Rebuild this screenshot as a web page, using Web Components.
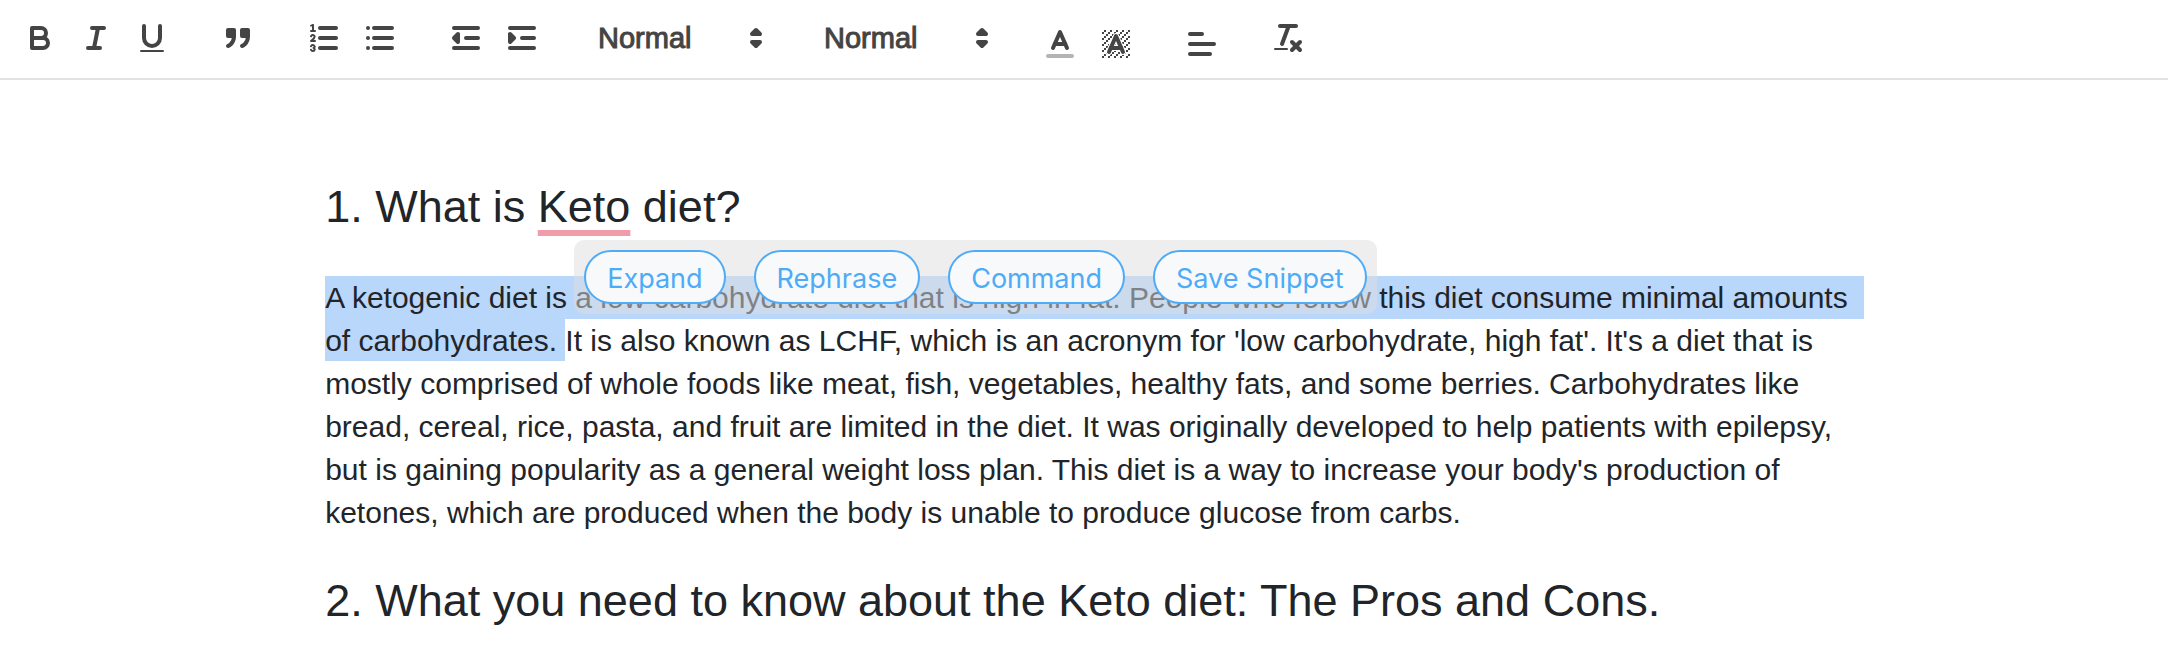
<!DOCTYPE html>
<html lang="en">
<head>
<meta charset="utf-8">
<title>Editor</title>
<style>
html,body{margin:0;background:#fff}
body{font-family:"Liberation Sans",Arial,Helvetica,sans-serif;color:#212529}
</style>
</head>
<body>
<rich-editor></rich-editor>
<script>
const line=(x1,y1,x2,y2)=>`<line x1="${x1}" y1="${y1}" x2="${x2}" y2="${y2}"/>`;
// Diagonal rows of unit squares behind the highlight letter
const hatch=()=>{
  let s='';
  for(let y=2;y<16;y++)for(let x=2;x<16;x++)if((x+y)%3===2)s+=`M${x} ${y}h1v1h-1z`;
  return `<path class="fill" d="${s}"/>`;
};
const letterA='<polyline points="5.5 13 9 5 12.5 13"/>'+line(11.63,11,6.38,11);
const ICONS={
bold:'<path d="M5,4H9.5A2.5,2.5,0,0,1,12,6.5v0A2.5,2.5,0,0,1,9.5,9H5V4Z"/><path d="M5,9h5.5A2.5,2.5,0,0,1,13,11.5v0A2.5,2.5,0,0,1,10.5,14H5V9Z"/>',
italic:line(7,4,13,4)+line(5,14,11,14)+line(8,14,10,4),
underline:'<path d="M5,3V9a4.012,4.012,0,0,0,4,4H9a4.012,4.012,0,0,0,4-4V3"/><rect class="fill" x="3" y="15" width="12" height="1" rx=".5"/>',
quote:'<g class="both"><rect x="4" y="5" width="3" height="3"/><rect x="11" y="5" width="3" height="3"/><path d="M7,8c0,4.031-3,5-3,5"/><path d="M14,8c0,4.031-3,5-3,5"/></g>',
ordered:line(7,4,15,4)+line(7,9,15,9)+line(7,14,15,14)+'<g class="thin"><path d="M2.5,5.5h2"/><path d="M4.5,10.5h-2c0-.234,1.85-1.076,1.85-2.234A0.959,0.959,0,0,0,2.5,8.156"/><path d="M2.5,14.846a0.959,0.959,0,0,0,1.85-.109A0.7,0.7,0,0,0,3.75,14a0.688,0.688,0,0,0,.6-0.736,0.959,0.959,0,0,0-1.85-.109"/></g><path class="fill" d="M3.5,6A0.5,0.5,0,0,1,3,5.5V3.085l-0.276.138A0.5,0.5,0,0,1,2.053,3c-0.124-.247-0.023-0.324.224-0.447l1-.5A0.5,0.5,0,0,1,4,2.5v3A0.5,0.5,0,0,1,3.5,6Z"/>',
bullet:line(6,4,15,4)+line(6,9,15,9)+line(6,14,15,14)+line(3,4,3,4)+line(3,9,3,9)+line(3,14,3,14),
outdent:line(3,14,15,14)+line(3,4,15,4)+line(9,9,15,9)+'<polyline class="both" points="5 7 5 11 3 9 5 7"/>',
indent:line(3,14,15,14)+line(3,4,15,4)+line(9,9,15,9)+'<polyline class="both" points="3 7 3 11 5 9 3 7"/>',
arrows:'<polygon class="both" points="7 11 9 13 11 11"/><polygon class="both" points="7 7 9 5 11 7"/>',
color:'<line opacity=".4" x1="3" x2="15" y1="15" y2="15"/><polyline points="5.5 11 9 3 12.5 11"/>'+line(11.63,9,6.38,9),
background:hatch()+`<g class="halo">${letterA}</g>${letterA}`,
align:line(3,9,15,9)+line(3,14,13,14)+line(3,4,9,4),
clean:line(5,3,13,3)+line(6,12,9.35,3)+line(11,11,15,15)+line(15,11,11,15)+'<rect class="fill" x="2" y="14" width="7" height="1" rx=".5"/>'
};
const define=(name,html)=>customElements.define(name,class extends HTMLElement{
  constructor(){super();this.attachShadow({mode:'open'}).innerHTML=typeof html==='function'?html(this):html;}
});
define('tool-icon',el=>`<style>:host{display:block;width:36px;height:36px}
svg{display:block;width:100%;height:100%;fill:none;stroke:#444;stroke-width:2;stroke-linecap:round;stroke-linejoin:round}
.fill{fill:#444;stroke:none}.both{fill:#444}.thin{stroke-width:1}.halo{stroke:#fff;stroke-width:3}</style>
<svg viewBox="0 0 18 18" aria-hidden="true">${ICONS[el.getAttribute('name')]}</svg>`);
define('tool-button',el=>`<style>:host{display:block}
button{display:block;box-sizing:border-box;width:56px;height:48px;padding:6px 10px;border:0;background:none;cursor:pointer}
:host([low]) button{padding:12px 10px 0}</style>
<button type="button" aria-label="${el.getAttribute('label')}"><tool-icon name="${el.getAttribute('icon')}"></tool-icon></button>`);
define('tool-group',`<style>:host{display:flex}</style><slot></slot>`);
define('tool-select',el=>`<style>:host{display:grid;width:196px;height:48px;align-items:center}
select,tool-icon{grid-area:1/1}
select{appearance:none;box-sizing:border-box;width:100%;height:100%;margin:0;padding:0 18px;border:0;background:none;color:#444;font:29px "Liberation Sans",Arial,sans-serif;-webkit-text-stroke:1px #444}
tool-icon{justify-self:end;margin-right:2px;pointer-events:none}</style>
<select aria-label="${el.getAttribute('label')}"><option>Normal</option></select><tool-icon name="arrows"></tool-icon>`);
define('editor-toolbar',`<style>:host{display:flex;flex-wrap:wrap;gap:0 30px;padding:14px 12px 16px;border-bottom:2px solid #e2e2e2}</style>
<tool-group><tool-button icon="bold" label="Bold"></tool-button><tool-button icon="italic" label="Italic"></tool-button><tool-button icon="underline" label="Underline"></tool-button></tool-group>
<tool-group><tool-button icon="quote" label="Quote"></tool-button></tool-group>
<tool-group><tool-button icon="ordered" label="Numbered list"></tool-button><tool-button icon="bullet" label="Bulleted list"></tool-button></tool-group>
<tool-group><tool-button icon="outdent" label="Decrease indent"></tool-button><tool-button icon="indent" label="Increase indent"></tool-button></tool-group>
<tool-select label="Size"></tool-select>
<tool-select label="Heading"></tool-select>
<tool-group><tool-button low icon="color" label="Text color"></tool-button><tool-button low icon="background" label="Highlight color"></tool-button></tool-group>
<tool-group><tool-button low icon="align" label="Alignment"></tool-button></tool-group>
<tool-group><tool-button icon="clean" label="Clear formatting"></tool-button></tool-group>`);
define('action-button',`<style>:host{display:block}
button{display:block;box-sizing:border-box;height:54px;padding:2px 21px 0;border:2px solid #4dabf7;border-radius:27px;background:#f8f9fa;color:#4dabf7;font:27px Inter,sans-serif;white-space:nowrap;cursor:pointer}</style>
<button type="button"><slot></slot></button>`);
define('selection-menu',`<style>:host{display:flex;gap:28px;padding:10px;border-radius:10px;background:rgba(222,222,222,.5)}</style><slot></slot>`);
define('editor-document',`<style>
:host{display:block;margin:0 14% 0 15%;padding:97px 0 32px}
h2{margin:0;font-size:45px;line-height:60px;font-weight:400}
.misspelt{text-decoration:underline 6px #f19cab;text-underline-offset:8px;text-decoration-skip-ink:none}
.passage{position:relative;margin:39px 0 37px}
p{margin:0;font-size:30px;line-height:43px;background:linear-gradient(#b9d6fb,#b9d6fb) 0 0/100% 43px no-repeat}
mark{background:#b9d6fb;color:inherit;padding:5px 0 4px}
selection-menu{position:absolute;left:249px;top:-36px}
</style>
<h2>1. What is <span class="misspelt">Keto</span> diet?</h2>
<div class="passage"><p><mark>A ketogenic diet is a low carbohydrate diet that is high in fat. People who follow this diet consume minimal amounts of carbohydrates. </mark>It is also known as LCHF, which is an acronym for 'low carbohydrate, high fat'. It's a diet that is mostly comprised of whole foods like meat, fish, vegetables, healthy fats, and some berries. Carbohydrates like bread, cereal, rice, pasta, and fruit are limited in the diet. It was originally developed to help patients with epilepsy, but is gaining popularity as a general weight loss plan. This diet is a way to increase your body's production of ketones, which are produced when the body is unable to produce glucose from carbs.</p>
<selection-menu><action-button>Expand</action-button><action-button>Rephrase</action-button><action-button>Command</action-button><action-button>Save Snippet</action-button></selection-menu></div>
<h2>2. What you need to know about the Keto diet: The Pros and Cons.</h2>`);
define('rich-editor',`<style>:host{display:block}</style><editor-toolbar></editor-toolbar><editor-document></editor-document>`);
</script>
</body>
</html>
